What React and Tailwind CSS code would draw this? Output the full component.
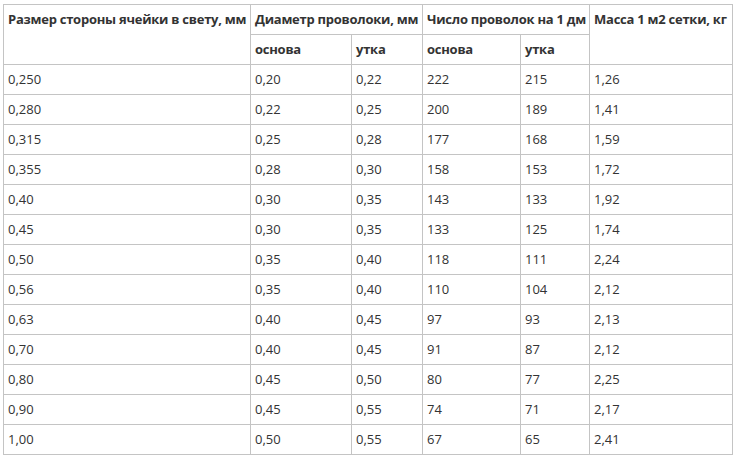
const rows = [
  ["0,250", "0,20", "0,22", "222", "215", "1,26"],
  ["0,280", "0,22", "0,25", "200", "189", "1,41"],
  ["0,315", "0,25", "0,28", "177", "168", "1,59"],
  ["0,355", "0,28", "0,30", "158", "153", "1,72"],
  ["0,40", "0,30", "0,35", "143", "133", "1,92"],
  ["0,45", "0,30", "0,35", "133", "125", "1,74"],
  ["0,50", "0,35", "0,40", "118", "111", "2,24"],
  ["0,56", "0,35", "0,40", "110", "104", "2,12"],
  ["0,63", "0,40", "0,45", "97", "93", "2,13"],
  ["0,70", "0,40", "0,45", "91", "87", "2,12"],
  ["0,80", "0,45", "0,50", "80", "77", "2,25"],
  ["0,90", "0,45", "0,55", "74", "71", "2,17"],
  ["1,00", "0,50", "0,55", "67", "65", "2,41"],
];

const cell = "border border-[#c4c4c4] px-[4px] h-[30px] align-middle text-left whitespace-nowrap";

export default function App() {
  return (
    <div className="bg-white min-h-screen pl-[3px] pt-[4px] font-['Open_Sans',sans-serif] text-[13px] text-[#333]">
      <table className="table-fixed border-collapse w-[729px]">
        <colgroup>
          <col className="w-[247px]" />
          <col className="w-[101px]" />
          <col className="w-[71px]" />
          <col className="w-[98px]" />
          <col className="w-[69px]" />
          <col className="w-[143px]" />
        </colgroup>
        <thead className="font-bold tracking-[-0.25px]">
          <tr>
            <th rowSpan={2} className={`${cell} align-top pt-[5px]`}>Размер стороны ячейки в свету, мм</th>
            <th colSpan={2} className={cell}>Диаметр проволоки, мм</th>
            <th colSpan={2} className={cell}>Число проволок на 1 дм</th>
            <th rowSpan={2} className={`${cell} align-top pt-[5px]`}>Масса 1 м2 сетки, кг</th>
          </tr>
          <tr>
            <th className={cell}>основа</th>
            <th className={cell}>утка</th>
            <th className={cell}>основа</th>
            <th className={cell}>утка</th>
          </tr>
        </thead>
        <tbody>
          {rows.map((r) => (
            <tr key={r[0]}>
              {r.map((v, i) => (
                <td key={i} className={cell}>{v}</td>
              ))}
            </tr>
          ))}
        </tbody>
      </table>
    </div>
  );
}
